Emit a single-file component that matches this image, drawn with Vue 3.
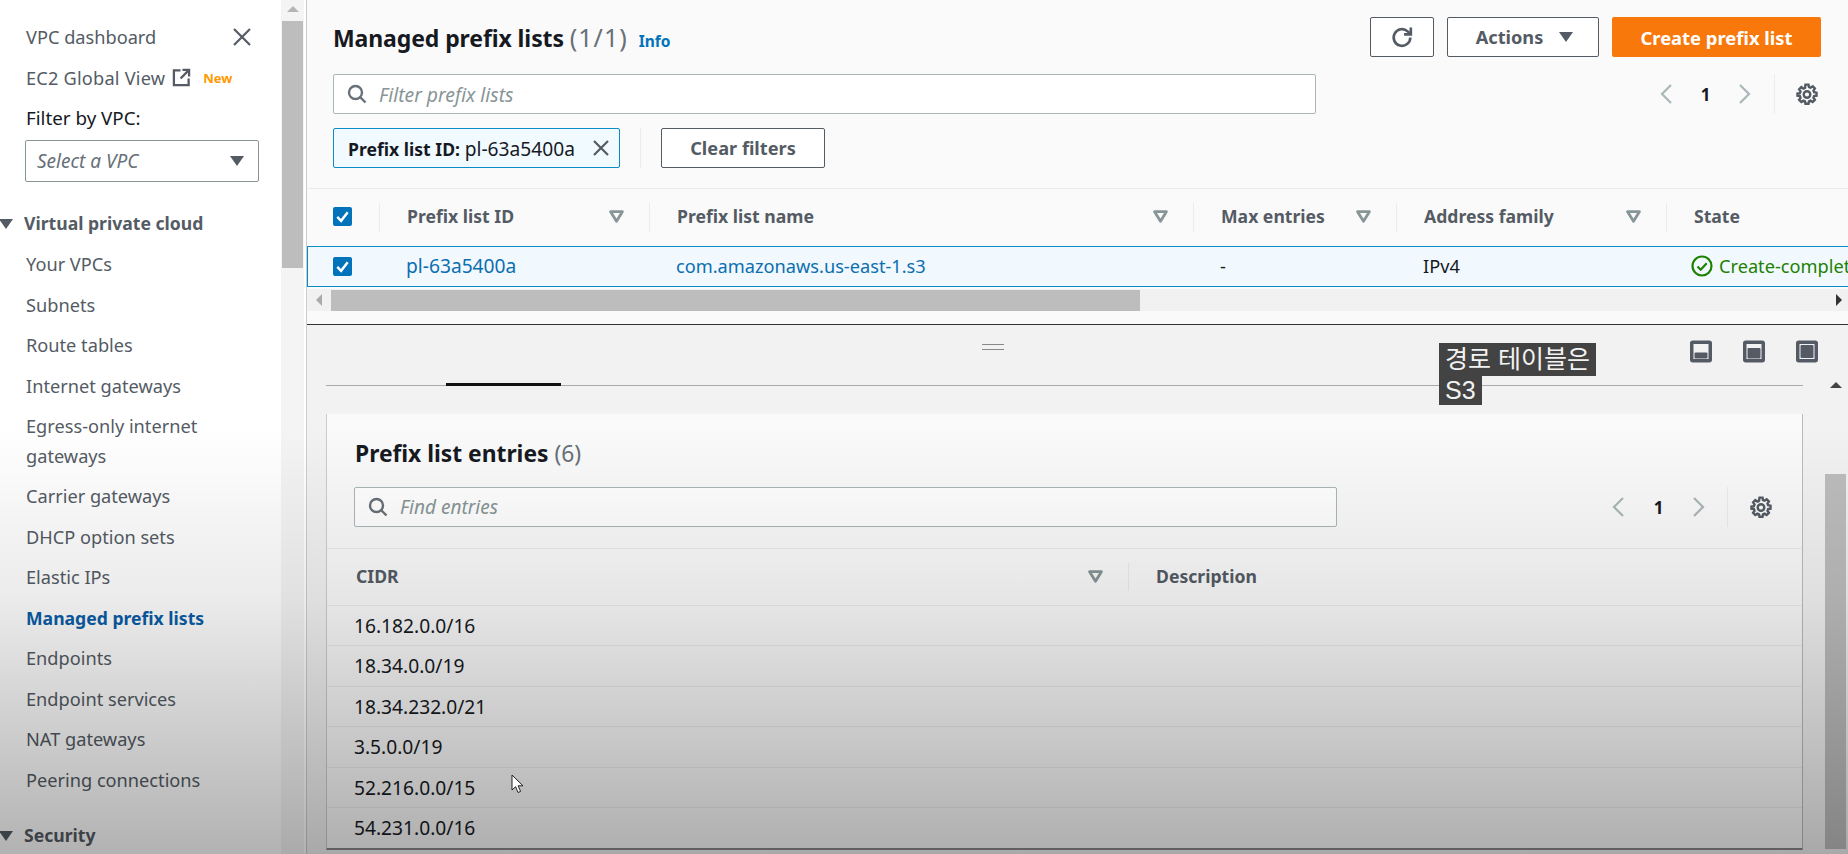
<script setup>
const navItems = [
  { label: 'Your VPCs' },
  { label: 'Subnets' },
  { label: 'Route tables' },
  { label: 'Internet gateways' },
  { label: 'Egress-only internet gateways', wrap: true },
  { label: 'Carrier gateways' },
  { label: 'DHCP option sets' },
  { label: 'Elastic IPs' },
  { label: 'Managed prefix lists', active: true },
  { label: 'Endpoints' },
  { label: 'Endpoint services' },
  { label: 'NAT gateways' },
  { label: 'Peering connections' }
]
const columns = [
  { label: 'Prefix list ID', sort: true },
  { label: 'Prefix list name', sort: true },
  { label: 'Max entries', sort: true },
  { label: 'Address family', sort: true },
  { label: 'State', sort: false }
]
const cidrs = ['16.182.0.0/16', '18.34.0.0/19', '18.34.232.0/21', '3.5.0.0/19', '52.216.0.0/15', '54.231.0.0/16']
const gearPath = 'M8.6 1.5h2.8l.4 2.2 1.5.6 1.9-1.3 2 2-1.3 1.9.6 1.5 2.2.4v2.8l-2.2.4-.6 1.5 1.3 1.9-2 2-1.9-1.3-1.5.6-.4 2.2H8.6l-.4-2.2-1.5-.6-1.9 1.3-2-2 1.3-1.9-.6-1.5-2.2-.4V9.6l2.2-.4.6-1.5-1.3-1.9 2-2 1.9 1.3 1.5-.6z'
</script>

<template>
  <div class="page">
    <aside class="nav">
      <div class="nav-top">
        <a class="nav-link">VPC dashboard</a>
        <svg class="close" viewBox="0 0 20 20"><path d="M2 2l16 16M18 2L2 18" /></svg>
      </div>
      <div class="nav-global">
        <a class="nav-link">EC2 Global View</a>
        <svg class="ext" viewBox="0 0 20 20"><path d="M9 2.5H2v15.500h15.500V11M11 2h7v7M18 2L9 11" /></svg>
        <span class="new">New</span>
      </div>
      <div class="filter-label">Filter by VPC:</div>
      <div class="vpc-select">
        <span>Select a VPC</span>
        <i class="tri"></i>
      </div>
      <div class="group"><i class="tri group-tri"></i>Virtual private cloud</div>
      <a
        v-for="item in navItems"
        :key="item.label"
        class="nav-item"
        :class="{ active: item.active, wrap: item.wrap }"
      >{{ item.label }}</a>
      <div class="group security"><i class="tri group-tri"></i>Security</div>
    </aside>

    <div class="nav-scroll">
      <i class="arrow-up"></i>
      <div class="nav-thumb"></div>
    </div>

    <main class="main">
      <section class="top">
        <div class="head-row">
          <h1>Managed prefix lists <span class="count wide">(1/1)</span><a class="info">Info</a></h1>
          <div class="actions">
            <button class="btn icon-btn">
              <svg viewBox="0 0 24 24" class="refresh"><path d="M19.500 12a8 8 0 1 1-2.600-5.900L19.500 8.500M20 2.500v6.500h-6.500" /></svg>
            </button>
            <button class="btn actions-btn">Actions<i class="tri"></i></button>
            <button class="btn primary">Create prefix list</button>
          </div>
        </div>

        <div class="filter-row">
          <div class="search top-search">
            <svg viewBox="0 0 20 20"><circle cx="8.500" cy="8.500" r="6.500" /><path d="M13.500 13.500l5 5" /></svg>
            <span>Filter prefix lists</span>
          </div>
          <div class="pager">
            <svg class="chev" viewBox="0 0 14 22"><path d="M12 2L3 11l9 9" /></svg>
            <b>1</b>
            <svg class="chev" viewBox="0 0 14 22"><path d="M2 2l9 9-9 9" /></svg>
            <span class="vline"></span>
            <svg class="gear" viewBox="0 0 20 21"><path :d="gearPath" /><circle cx="10" cy="10.500" r="3" /></svg>
          </div>
        </div>

        <div class="chip-row">
          <div class="chip">
            <span><b>Prefix list ID:</b> <span class="digits">pl-63a5400a</span></span>
            <svg viewBox="0 0 18 18"><path d="M2 2l14 14M16 2L2 16" /></svg>
          </div>
          <span class="vline chip-sep"></span>
          <button class="btn clear">Clear filters</button>
        </div>

        <div class="table-wrap">
          <div class="grid thead">
            <div class="cell check-cell"><span class="check"><svg viewBox="0 0 20 20"><path d="M4.500 10.500l4 4 7-9" /></svg></span></div>
            <div v-for="col in columns" :key="col.label" class="cell th">
              <span>{{ col.label }}</span>
              <svg v-if="col.sort" class="sort" viewBox="0 0 14 12"><path d="M1.500 1.500h11L7 10.500z" /></svg>
            </div>
          </div>
          <div class="grid selected">
            <div class="cell check-cell"><span class="check"><svg viewBox="0 0 20 20"><path d="M4.500 10.500l4 4 7-9" /></svg></span></div>
            <div class="cell td"><a class="digits">pl-63a5400a</a></div>
            <div class="cell td"><a>com.amazonaws.us-east-1.s3</a></div>
            <div class="cell td">-</div>
            <div class="cell td">IPv4</div>
            <div class="cell td state">
              <svg viewBox="0 0 22 22"><circle cx="11" cy="11" r="9.500" /><path d="M6.500 11.500l3.200 3.200 6-6.500" /></svg>
              <span>Create-complete</span>
            </div>
          </div>
        </div>

        <div class="hscroll">
          <i class="arrow-left"></i>
          <div class="h-thumb"></div>
          <i class="arrow-right"></i>
        </div>
      </section>

      <section class="split">
        <div class="split-body">
          <div class="split-head">
            <div class="handle"></div>
            <div class="tabs"><span class="tab-active"></span></div>
          </div>

          <div class="card">
            <h2>Prefix list entries <span class="count">(6)</span></h2>
            <div class="filter-row card-filter">
              <div class="search card-search">
                <svg viewBox="0 0 20 20"><circle cx="8.500" cy="8.500" r="6.500" /><path d="M13.500 13.500l5 5" /></svg>
                <span>Find entries</span>
              </div>
              <div class="pager">
                <svg class="chev" viewBox="0 0 14 22"><path d="M12 2L3 11l9 9" /></svg>
                <b>1</b>
                <svg class="chev" viewBox="0 0 14 22"><path d="M2 2l9 9-9 9" /></svg>
                <span class="vline"></span>
                <svg class="gear" viewBox="0 0 20 21"><path :d="gearPath" /><circle cx="10" cy="10.500" r="3" /></svg>
              </div>
            </div>
            <div class="entries-head">
              <div class="cell th cidr-th">
                <span>CIDR</span>
                <svg class="sort" viewBox="0 0 14 12"><path d="M1.500 1.500h11L7 10.500z" /></svg>
              </div>
              <div class="cell th desc-th"><span>Description</span></div>
            </div>
            <div v-for="cidr in cidrs" :key="cidr" class="entry">{{ cidr }}</div>
          </div>
        </div>

        <div class="split-side">
          <div class="panel-icons">
            <svg viewBox="0 0 22 22"><rect x="1.750" y="1.750" width="18.500" height="18.500" rx="1" class="frame" /><rect x="4.500" y="12" width="13" height="6" rx="1" class="fill" /></svg>
            <svg viewBox="0 0 22 22"><rect x="1.750" y="1.750" width="18.500" height="18.500" rx="1" class="frame" /><rect x="4.500" y="7.500" width="13" height="10.500" rx="1" class="fill" /></svg>
            <svg viewBox="0 0 22 22"><rect x="1.750" y="1.750" width="18.500" height="18.500" rx="1" class="frame" /><rect x="4.500" y="4.500" width="13" height="13" rx="1" class="fill" /></svg>
          </div>
          <div class="v-scroll">
            <i class="arrow-up dark"></i>
            <div class="v-thumb"></div>
          </div>
        </div>
      </section>
    </main>

    <div class="shade"></div>
    <svg class="cursor" viewBox="0 0 13 20"><path d="M1 1v15l3.600-3.300 2.400 5.800 2.600-1.100-2.500-5.600h4.900z" /></svg>
    <div class="caption">
      <span class="cap-line">경로 테이블은</span>
      <span class="cap-line">S3</span>
    </div>
  </div>
</template>

<style>
html, body { margin: 0; background: #fff; overflow: hidden; }
</style>

<style scoped>
.page {
  position: relative;
  display: flex;
  width: 1848px;
  height: 854px;
  overflow: hidden;
  font-family: "Noto Sans", "Noto Sans CJK KR", sans-serif;
  font-size: 18.2px;
  color: #16191f;
  background: #fff;
}
b, .group, .btn, .th, .nav-item.active { font-size: 17.6px; }
svg { display: block; flex: none; fill: none; }
button { font: inherit; }

/* sidebar */
.nav { width: 281px; flex: none; padding-top: 17px; box-sizing: border-box; }
.nav-top, .nav-global { display: flex; align-items: center; height: 40px; padding-left: 26px; }
.nav-top { justify-content: space-between; padding-right: 29px; }
.nav-global { height: 41px; }
.nav-global .nav-link { letter-spacing: 0.2px; }
.nav-link, .nav-item { color: #545b64; }
.close { width: 20px; height: 20px; stroke: #545b64; stroke-width: 2.2; }
.ext { width: 19px; height: 19px; margin-left: 7px; stroke: #545b64; stroke-width: 2.4; }
.new { margin-left: 12px; font-size: 13px; font-weight: 700; color: #ff9900; }
.filter-label { height: 24px; margin-top: 8px; padding-left: 26px; line-height: 24px; font-size: 18.8px; color: #16191f; }
.vpc-select {
  display: flex;
  align-items: center;
  justify-content: space-between;
  width: 234px;
  height: 42px;
  box-sizing: border-box;
  margin: 10px 0 0 25px;
  padding: 0 14px 0 11px;
  border: 1px solid #879596;
  border-radius: 2px;
  font-size: 19px;
  font-style: italic;
  color: #687078;
}
.tri {
  display: block;
  width: 0;
  height: 0;
  border-left: 7px solid transparent;
  border-right: 7px solid transparent;
  border-top: 10px solid #545b64;
}
.group {
  position: relative;
  height: 41px;
  margin-top: 21px;
  padding-left: 24px;
  line-height: 41px;
  font-weight: 700;
  color: #545b64;
}
.group-tri { position: absolute; left: -1px; top: 16px; }
.security { margin-top: 15px; }
.nav-item { display: block; height: 40.5px; line-height: 40.5px; padding-left: 26px; }
.nav-item.wrap { width: 215px; height: 70px; line-height: 30px; padding-top: 5px; box-sizing: border-box; }
.nav-item.active { color: #0a5da8; font-weight: 700; }

.nav-scroll { width: 23px; flex: none; padding-top: 3px; box-sizing: border-box; background: #f4f4f4; }
.arrow-up {
  display: block;
  width: 0;
  height: 0;
  margin: 3px auto 0;
  border-left: 6px solid transparent;
  border-right: 6px solid transparent;
  border-bottom: 6px solid #b5b5b5;
}
.arrow-up.dark { border-bottom-color: #444; }
.nav-thumb { width: 21px; height: 247px; margin: 9px 0 0 1px; background: #bdbdbd; }

/* main */
.main {
  flex: 1;
  min-width: 0;
  margin-left: 2px;
  border-left: 1px solid #ccc;
  display: flex;
  flex-direction: column;
}
.top { height: 325px; box-sizing: border-box; padding-top: 17px; background: #fafafa; overflow: hidden; border-bottom: 1.5px solid #333; flex: none; }
.head-row { display: flex; justify-content: space-between; align-items: center; height: 40px; padding: 0 27px 0 26px; }
h1 { margin: 0; font-size: 23px; font-weight: 700; letter-spacing: -0.1px; color: #16191f; }
h2 { margin: 0 0 0 28px; font-size: 22.8px; font-weight: 700; line-height: 28px; color: #16191f; }
.count { font-weight: 400; color: #687078; }
.count.wide { font-size: 25px; letter-spacing: 1px; }
.info { margin-left: 11px; font-size: 15.500px; font-weight: 700; color: #0073bb; letter-spacing: 0; }
.actions { display: flex; gap: 13px; }
.btn {
  height: 40px;
  box-sizing: border-box;
  padding: 0;
  border: 1px solid #545b64;
  border-radius: 2px;
  background: #fff;
  color: #545b64;
  font-size: 18.2px;
  font-weight: 700;
}
.icon-btn { width: 64px; display: flex; align-items: center; justify-content: center; }
.refresh { width: 25px; height: 25px; stroke: #545b64; stroke-width: 2.5; }
.actions-btn { width: 152px; display: flex; align-items: center; justify-content: center; gap: 16px; padding-left: 3px; }
.primary { width: 209px; border: 0; background: #f9780b; color: #fff; font-size: 18.4px; }

.filter-row { display: flex; justify-content: space-between; align-items: center; }
.top > .filter-row { height: 40px; margin-top: 17px; padding-left: 26px; padding-right: 30px; }
.search {
  display: flex;
  align-items: center;
  height: 40px;
  box-sizing: border-box;
  padding-left: 13px;
  gap: 12px;
  border: 1px solid #aab7b8;
  border-radius: 2px;
  background: #fff;
  font-size: 19.300px;
  font-style: italic;
  color: #879596;
}
.search svg { width: 20px; height: 20px; stroke: #687078; stroke-width: 2.4; }
.top-search { width: 983px; }
.card-search { width: 983px; }

.pager { display: flex; align-items: center; }
.pager b { font-size: 17px; font-weight: 700; color: #16191f; width: 65px; text-align: center; }
.chev { width: 14px; height: 22px; stroke: #aab7b8; stroke-width: 2.2; }
.vline { display: block; width: 1px; height: 40px; background: #eaeded; }
.gear { width: 22px; height: 23px; stroke: #545b64; stroke-width: 2.2; }
.pager .vline { margin-left: 22px; margin-right: 21px; }

.chip-row { display: flex; align-items: center; height: 40px; margin-top: 14px; padding-left: 26px; }
.chip {
  display: flex;
  align-items: center;
  justify-content: space-between;
  width: 287px;
  height: 40px;
  box-sizing: border-box;
  padding: 0 9px 0 14px;
  border: 1px solid #0a8cc4;
  border-radius: 2px;
  background: #f1faff;
  white-space: nowrap;
}
.chip svg { width: 18px; height: 18px; stroke: #545b64; stroke-width: 2.2; }
.chip-sep { margin: 0 20px; }
.clear { width: 164px; }
.digits { font-size: 19.2px; }

.table-wrap { margin-top: 20px; border-top: 1px solid #eaeded; }
.grid {
  display: grid;
  grid-template-columns: 73px 270px 544px 203px 270px 300px;
  width: 1660px;
}
.thead { height: 57px; }
.cell { display: flex; align-items: center; min-width: 0; }
.thead .cell { position: relative; padding-bottom: 3px; box-sizing: border-box; }
.thead .cell + .cell::before, .desc-th::before {
  content: "";
  position: absolute;
  left: -1px;
  top: 14px;
  bottom: 14px;
  width: 1px;
  background: #eaeded;
}
.check-cell { padding-left: 26px; }
.selected .check-cell { padding-left: 25px; }
.check {
  display: block;
  width: 19px;
  height: 19px;
  border-radius: 2px;
  background: #0073bb;
}
.check svg { width: 19px; height: 19px; stroke: #fff; stroke-width: 2.6; }
.th { justify-content: space-between; padding: 0 26px 0 27px; font-weight: 700; color: #545b64; }
.sort { width: 15px; height: 13px; stroke: #879596; stroke-width: 2.6; stroke-linejoin: round; }
.selected {
  height: 41px;
  box-sizing: border-box;
  border-top: 1px solid #0a8cc4;
  border-bottom: 1px solid #0a8cc4;
  border-left: 1px solid #0a8cc4;
  background: #f1f8fe;
  grid-template-columns: 72px 270px 544px 203px 270px 300px;
}
.td { padding-left: 26px; padding-bottom: 2px; box-sizing: border-box; white-space: nowrap; }
.td a { color: #0b6fb0; }
.state { color: #1d8102; gap: 6px; padding-left: 24px; }
.state svg { width: 22px; height: 22px; stroke: #1d8102; stroke-width: 2.2; }

.hscroll { display: flex; align-items: center; height: 22px; margin-top: 2px; background: #f1f1f1; }
.arrow-left, .arrow-right { display: block; width: 0; height: 0; border-top: 6px solid transparent; border-bottom: 6px solid transparent; }
.arrow-left { margin-left: 9px; border-right: 6px solid #aaa; }
.h-thumb { width: 809px; height: 21px; margin-left: 9px; background: #bdbdbd; }
.arrow-right { margin-left: auto; margin-right: 6px; border-left: 6px solid #333; }

/* split panel */
.split { flex: 1; min-height: 0; display: flex; background: #f2f2f2; }
.split-body { width: 1496px; flex: none; padding-left: 19px; box-sizing: border-box; }
.split-head { height: 89px; position: relative; }
.handle { position: absolute; left: 656px; top: 19px; width: 22px; height: 4px; border-top: 1px solid #888; border-bottom: 1px solid #888; }
.tabs { position: absolute; left: 0; right: 0; top: 60px; height: 1px; background: #aaa; }
.tab-active { position: absolute; left: 120px; top: -2px; width: 115px; height: 3px; background: #111; }

.card {
  height: 436px;
  box-sizing: border-box;
  padding-top: 26px;
  background: #fafafa;
  border-left: 1px solid #ccc;
  border-right: 1px solid #bbb;
  border-bottom: 2px solid #888;
}
.card-filter { height: 40px; margin-top: 19px; padding-left: 27px; padding-right: 30px; }
.card-search { font-size: 19px; }
.card-filter .pager b { width: 67px; }
.card-filter .vline { margin-left: 21px; margin-right: 22px; }
.entries-head {
  display: grid;
  grid-template-columns: 802px 1fr;
  height: 58px;
  margin-top: 21px;
  border-top: 1px solid #eaeded;
  border-bottom: 1px solid #eaeded;
  box-sizing: border-box;
}
.entries-head .cell { position: relative; padding-bottom: 2px; box-sizing: border-box; }
.cidr-th { padding-left: 29px; }
.entry {
  height: 40.4px;
  box-sizing: border-box;
  padding-left: 27px;
  font-size: 19.2px;
  line-height: 40px;
  border-bottom: 1px solid #eaeded;
}
.entry:last-child { border-bottom: 0; }

.split-side { flex: 1; min-width: 0; position: relative; display: flex; flex-direction: column; }
.panel-icons { display: flex; height: 62px; align-items: flex-start; gap: 31px; padding: 15px 0 0 7px; box-sizing: border-box; margin-left: -120px; }
.panel-icons svg { width: 22px; height: 23px; }
.frame { fill: none; stroke: #545b64; stroke-width: 3.5; }
.fill { fill: #545b64; }
.v-scroll { width: 22px; margin-left: 22px; flex: 1; position: relative; }
.v-thumb { position: absolute; left: 0; top: 87px; width: 21px; height: 375px; background: #bdbdbd; }
.v-scroll .arrow-up { margin-top: -5px; }

/* overlays */
.shade {
  position: absolute;
  inset: 0;
  pointer-events: none;
  background: linear-gradient(to bottom, rgba(0,0,0,0) 50%, rgba(0,0,0,.08) 70%, rgba(0,0,0,.3) 100%);
}
.cursor { position: absolute; left: 511px; top: 774px; width: 13px; height: 20px; fill: #fff; stroke: #222; stroke-width: 1; }
.caption {
  position: absolute;
  left: 1439px;
  top: 343px;
  display: flex;
  flex-direction: column;
  align-items: flex-start;
  font-family: "Liberation Sans", "Noto Sans CJK KR", sans-serif;
  font-size: 25px;
  color: #f2f2f2;
}
.cap-line { display: block; padding: 0 6px; height: 29px; line-height: 29px; background: #434343; }
.cap-line:first-child { height: 33px; line-height: 33px; }
</style>
